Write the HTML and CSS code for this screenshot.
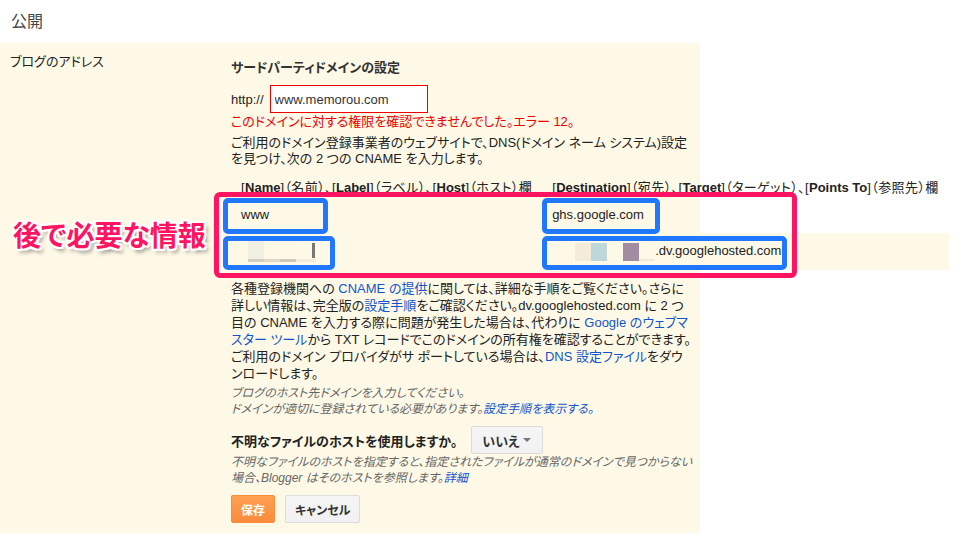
FILE: index.html
```html
<!DOCTYPE html>
<html lang="ja">
<head>
    <meta charset="UTF-8">
    <meta name="viewport" content="width=device-width, initial-scale=1.0">
    <title>公開 - ブログのアドレス</title>
    <link rel="stylesheet" href="styles.css">
</head>
<body>
    <h2 class="page-title">公開</h2>

    <div class="settings">
        <div class="settings-label">ブログのアドレス</div>

        <div class="settings-body">
            <h3 class="section-title">サードパーティドメインの設定</h3>

            <div class="url-row">
                <span>http://</span>
                <input type="text" class="url-input" value="www.memorou.com">
            </div>
            <p class="error-text">このドメインに対する権限を確認できませんでした。エラー 12。</p>

            <p class="instructions">
                ご利用のドメイン登録事業者のウェブサイトで、DNS(ドメイン ネーム システム)設定を見つけ、次の 2 つの CNAME を入力します。
            </p>

            <div class="cname-wrap">
                <table class="cname-table">
                    <tr>
                        <th class="col-name">[<b>Name</b>]（名前）、[<b>Label</b>]（ラベル）、[<b>Host</b>]（ホスト）欄</th>
                        <th>[<b>Destination</b>]（宛先）、[<b>Target</b>]（ターゲット）、[<b>Points To</b>]（参照先）欄</th>
                    </tr>
                    <tr>
                        <td>www</td>
                        <td>ghs.google.com</td>
                    </tr>
                    <tr class="alt">
                        <td><span class="redacted redacted-host"></span></td>
                        <td><span class="redacted redacted-target"></span>.dv.googlehosted.com</td>
                    </tr>
                </table>

                <!-- annotation overlay -->
                <div class="mark mark-group"></div>
                <div class="mark mark-a"></div>
                <div class="mark mark-b"></div>
                <div class="mark mark-c"></div>
                <div class="mark mark-d"></div>
                <div class="mark-label">後で必要な情報</div>
            </div>

            <p class="help">
                各種登録機関への <a href="#">CNAME の提供</a>に関しては、詳細な手順をご覧ください。さらに詳しい情報は、完全版の<a href="#">設定手順</a>をご確認ください。dv.googlehosted.com に 2 つ目の CNAME を入力する際に問題が発生した場合は、代わりに <a href="#">Google のウェブマスター ツール</a>から TXT レコードでこのドメインの所有権を確認することができます。ご利用のドメイン プロバイダがサ ポートしている場合は、<a href="#">DNS 設定ファイル</a>をダウンロードします。
            </p>

            <p class="hint">
                ブログのホスト先ドメインを入力してください。<br>
                ドメインが適切に登録されている必要があります。<a href="#">設定手順を表示する。</a>
            </p>

            <div class="hosting-row">
                <span class="hosting-q">不明なファイルのホストを使用しますか。</span>
                <div class="select">いいえ<span class="caret"></span></div>
            </div>
            <p class="hint hint-tight">
                不明なファイルのホストを指定すると、指定されたファイルが通常のドメインで見つからない場合、Blogger はそのホストを参照します。<a href="#">詳細</a>
            </p>

            <div class="actions">
                <button class="btn btn-save">保存</button>
                <button class="btn">キャンセル</button>
            </div>
        </div>
    </div>
</body>
</html>
```

FILE: styles.css
```css
:root {
    --cream: #fef9e7;
    --text: #222;
    --link: #15c;
    --hint: #666;
    --pink: #ff1462;
    --blue: #1f78ff;
}

* {
    box-sizing: border-box;
}

body {
    margin: 0;
    background: #fff;
    color: var(--text);
    font-family: "Liberation Sans", "Noto Sans CJK JP", sans-serif;
    font-size: 13px;
    font-feature-settings: "palt";
}

a {
    color: var(--link);
    text-decoration: none;
}

.page-title {
    margin: 0;
    padding: 0 11px;
    height: 43px;
    line-height: 43px;
    font-size: 16px;
    font-weight: normal;
    color: #444;
}

.settings {
    width: 700px;
    display: grid;
    grid-template-columns: 231px 1fr;
    background: var(--cream);
    padding-bottom: 10px;
}

.settings-label {
    padding: 10px;
    line-height: 17px;
}

.settings-body {
    padding-top: 16px;
    width: 462px;
}

.section-title {
    margin: 0;
    font-size: 13px;
    line-height: 17px;
    color: #333;
}

.url-row {
    margin-top: 9px;
    display: flex;
    align-items: center;
    gap: 6px;
}

.url-input {
    width: 158px;
    height: 28px;
    padding: 0 4px;
    border: 1px solid #e00;
    background: #fff;
    color: #333;
    font: inherit;
    outline: none;
}

.error-text {
    margin: 0;
    line-height: 17px;
    color: #e00;
}

.instructions {
    margin: 5px 0 0;
    line-height: 16px;
}

/* CNAME table */
.cname-wrap {
    position: relative;
    margin-top: 9px;
}

.cname-table {
    width: 715px;
    border-collapse: collapse;
}

.cname-table th {
    height: 20px;
    padding: 0 10px;
    text-align: left;
    font-weight: normal;
    white-space: nowrap;
    letter-spacing: 0.4px;
}

.cname-table th b {
    font-weight: bold;
    letter-spacing: 0;
}

.cname-table .col-name {
    width: 310px;
}

.cname-table td {
    height: 37px;
    padding: 0 10px;
    white-space: nowrap;
}

.cname-table .alt td {
    background: var(--cream);
}

.redacted {
    display: inline-block;
    vertical-align: middle;
}

.redacted-host {
    width: 68px;
    height: 22px;
    margin-left: 7px;
    background:
        linear-gradient(#777, #777) 64px 2px / 3px 15px no-repeat,
        linear-gradient(#f1f0e3, #f1f0e3) 0 0 / 16px 18px no-repeat,
        linear-gradient(90deg, #d3cfc2 0 16px, #e4d9c4 16px 32px, #cbc7bb 32px 48px, #f3ebd8 48px) 0 18px / 68px 3px no-repeat;
}

.redacted-target {
    width: 103px;
    height: 22px;
    background:
        linear-gradient(#f5ebd9, #f5ebd9) 23px 2px / 16px 18px no-repeat,
        linear-gradient(#c9ab8b, #c9ab8b) 23px 18px / 16px 2px no-repeat,
        linear-gradient(#bed7db, #bed7db) 39px 2px / 16px 18px no-repeat,
        linear-gradient(#a28ca1, #a28ca1) 71px 2px / 16px 18px no-repeat,
        linear-gradient(#efe9dc, #efe9dc) 87px 18px / 16px 2px no-repeat;
}

.mark {
    position: absolute;
    border: 5px solid var(--blue);
    border-radius: 5px;
}

.mark-group {
    left: -17px;
    top: 16px;
    width: 583px;
    height: 86px;
    border-color: var(--pink);
    border-radius: 6px;
}

.mark-a { left: -8px; top: 22px; width: 105px; height: 36px; }
.mark-b { left: -8px; top: 60px; width: 112px; height: 34px; }
.mark-c { left: 311px; top: 22px; width: 118px; height: 36px; }
.mark-d { left: 311px; top: 60px; width: 245px; height: 34px; }

.mark-label {
    position: absolute;
    left: -218px;
    top: 43px;
    font-family: "Noto Sans CJK JP", sans-serif;
    font-size: 28px;
    line-height: 30px;
    font-weight: bold;
    color: var(--pink);
    white-space: nowrap;
    text-shadow:
        2px 0 #fff, -2px 0 #fff, 0 2px #fff, 0 -2px #fff,
        2px 2px #fff, -2px -2px #fff, 2px -2px #fff, -2px 2px #fff,
        3px 4px 4px rgba(0, 0, 0, 0.45);
}

.help {
    margin: 10px 0 0;
    line-height: 17px;
}

.hint {
    margin: 3px 0 0;
    line-height: 16px;
    font-size: 12px;
    font-style: italic;
    color: var(--hint);
}

.hint-tight {
    margin-top: 0;
}

.hosting-row {
    margin-top: 9px;
    display: flex;
    align-items: center;
    gap: 14px;
}

.hosting-q {
    font-size: 13px;
    font-weight: bold;
}

.select {
    width: 72px;
    height: 28px;
    padding: 0 11px 0 10px;
    display: flex;
    align-items: center;
    justify-content: space-between;
    border: 1px solid #dcdcdc;
    border-radius: 2px;
    background: linear-gradient(#f5f5f5, #f1f1f1);
    font-weight: bold;
    color: #333;
}

.caret {
    width: 0;
    height: 0;
    border-left: 4px solid transparent;
    border-right: 4px solid transparent;
    border-top: 4px solid #777;
}

.actions {
    margin-top: 9px;
    display: flex;
    gap: 10px;
}

.btn {
    height: 28px;
    padding: 0 9px;
    border: 1px solid #dcdcdc;
    border-radius: 2px;
    background: linear-gradient(#f5f5f5, #f1f1f1);
    color: #333;
    font-family: inherit;
    font-size: 12px;
    font-weight: bold;
    font-feature-settings: "palt";
    cursor: pointer;
}

.btn-save {
    border-color: #f78a3c;
    background: linear-gradient(#ffa052, #f98b3c);
    color: #fff;
}
```
